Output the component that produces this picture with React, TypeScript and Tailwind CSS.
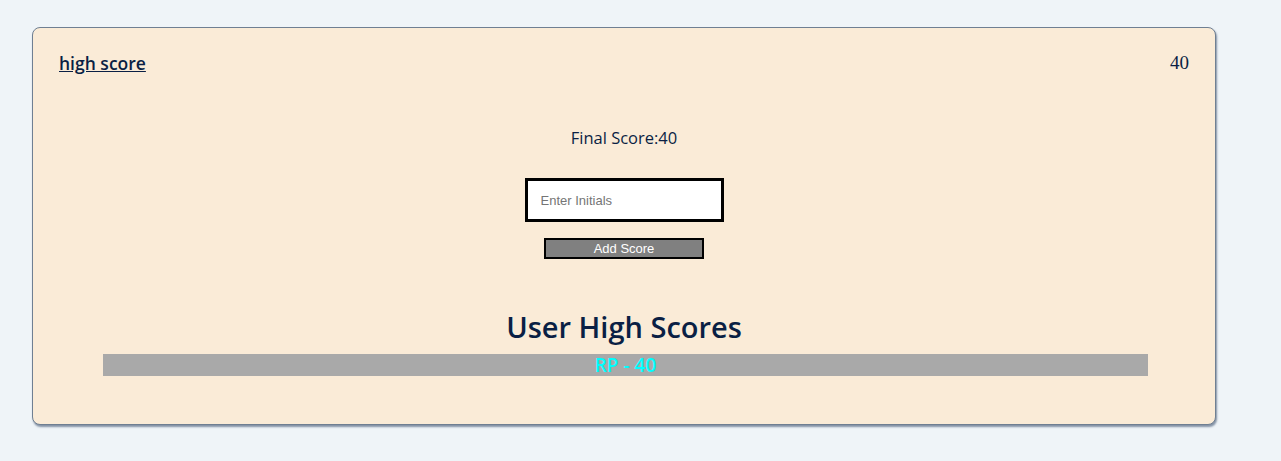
export default function App() {
  return (
    <div className="min-h-screen bg-[#eff4f8] pt-[27px] pl-[32px] font-['Open_Sans',sans-serif] text-[#0a1f44]">
      <div className="w-[1184px] h-[398px] bg-[#faebd7] border border-[#6f7f92] rounded-[8px] shadow-[1px_2px_2px_rgba(60,80,110,0.6)] flex flex-col">
        <div className="flex justify-between items-center pt-[22px] px-[26px] h-[47px]">
          <a href="#" className="text-[17.5px] font-semibold underline leading-[24px]">high score</a>
          <span className="text-[19px] leading-[24px] font-['Liberation_Serif',serif]">40</span>
        </div>
        <div className="flex flex-col items-center">
          <p className="mt-[51px] text-[16.5px] leading-[24px]">Final Score:40</p>
          <input
            type="text"
            placeholder="Enter Initials"
            className="mt-[28px] w-[199px] h-[44px] border-[3px] border-black bg-white px-[13px] text-[13px] font-['Liberation_Sans',sans-serif] placeholder:text-[#757575] outline-none"
          />
          <button className="mt-[16px] w-[160px] h-[21px] border-2 border-black bg-[#808080] text-white text-[13px] leading-[16px] font-medium font-['Liberation_Sans',sans-serif]">
            Add Score
          </button>
          <h2 className="mt-[52px] text-[29px] leading-[32px] font-semibold">User High Scores</h2>
        </div>
        <ul className="mt-[11px] ml-[70px] mr-[67px]">
          <li className="bg-[#a9a9a9] h-[22px] text-center text-[19px] leading-[22px] font-semibold text-[#00ffff]">RP - 40</li>
        </ul>
      </div>
    </div>
  )
}
